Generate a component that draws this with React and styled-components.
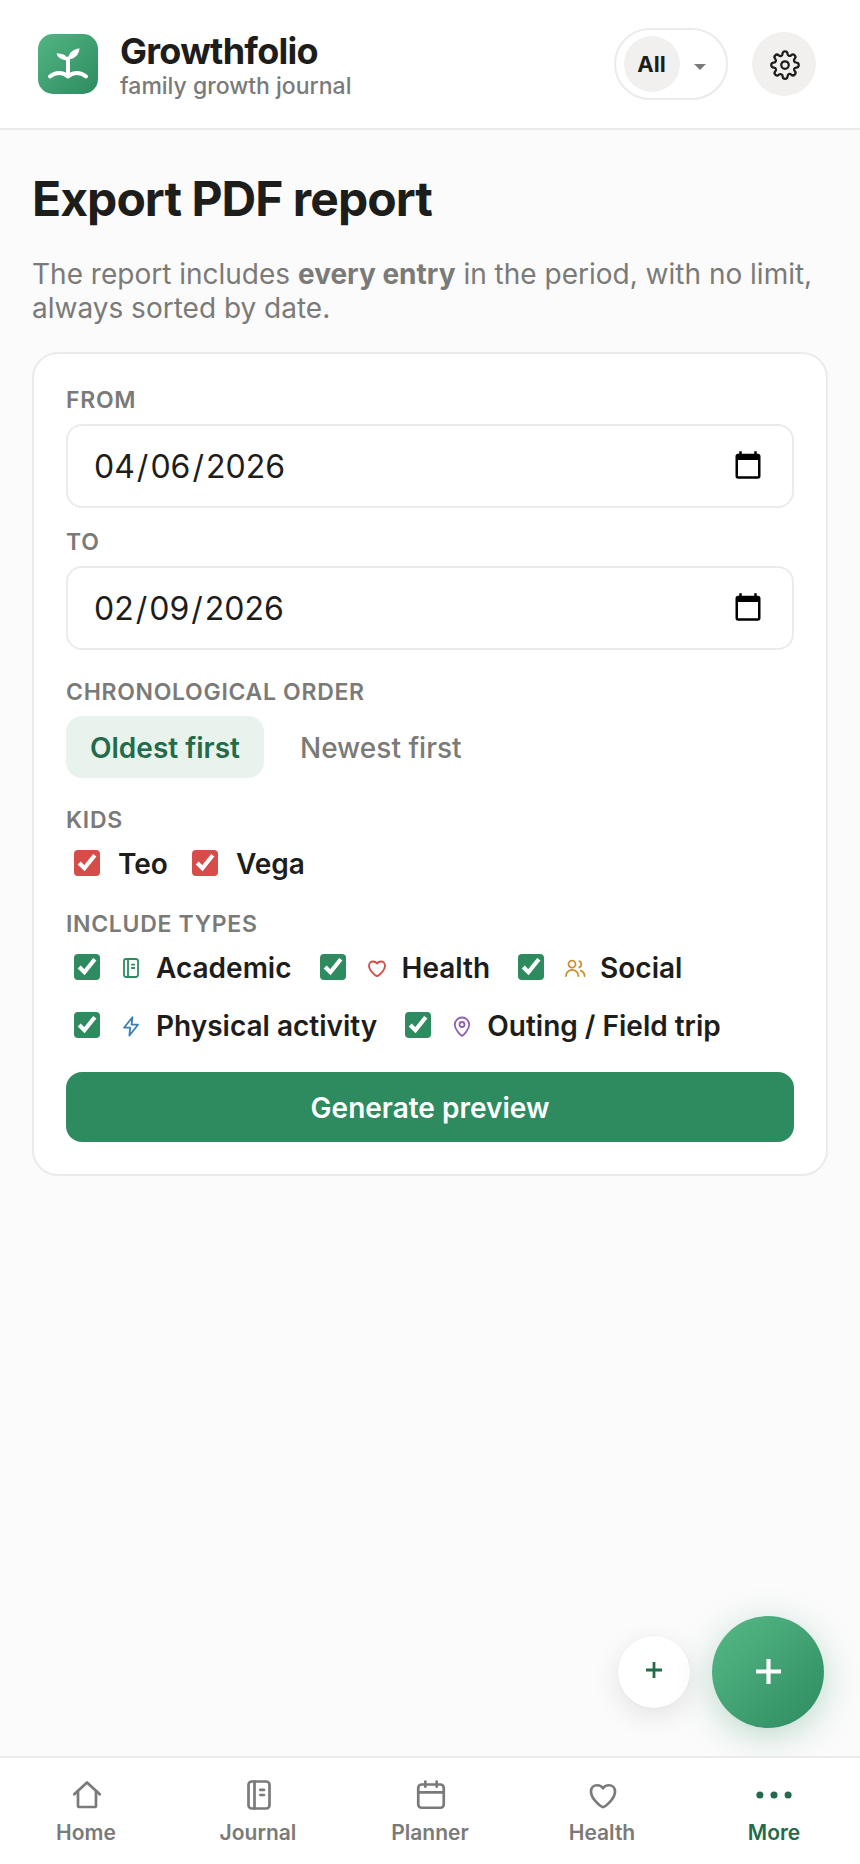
import React, { useState } from 'react';
import styled, { createGlobalStyle } from 'styled-components';

const GlobalStyle = createGlobalStyle`
  * {
    box-sizing: border-box;
  }

  body {
    margin: 0;
    background: #fbfbfb;
    color: #1d1d1b;
    font-family: Inter, 'Liberation Sans', sans-serif;
  }

  button, input {
    font-family: inherit;
  }
`;

const Page = styled.div`
  display: flex;
  flex-direction: column;
  height: 1864px;
`;

const HeaderWrapper = styled.header`
  display: flex;
  align-items: center;
  height: 130px;
  padding: 0 44px 0 38px;
  background: #fff;
  border-bottom: 2px solid #ebebeb;
`;

const Logo = styled.svg`
  width: 60px;
  height: 60px;
  flex-shrink: 0;
`;

const Brand = styled.div`
  flex: 1;
  margin-left: 22px;
  padding-top: 4px;
`;

const BrandName = styled.div`
  font-size: 36px;
  font-weight: 700;
  line-height: 38px;
  letter-spacing: -0.72px;
`;

const BrandTagline = styled.div`
  padding-top: 1px;
  font-size: 23px;
  font-weight: 500;
  line-height: 30px;
  color: #7a7a78;
`;

const Picker = styled.button`
  display: flex;
  align-items: center;
  gap: 14px;
  width: 114px;
  height: 72px;
  padding: 0 0 0 8px;
  background: #fff;
  border: 2px solid #ebebeb;
  border-radius: 36px;
`;

const PickerValue = styled.span`
  display: flex;
  align-items: center;
  justify-content: center;
  width: 56px;
  height: 56px;
  padding-right: 1px;
  border-radius: 50%;
  background: #f1f0ee;
  color: #1d1d1b;
  font-size: 22px;
  font-weight: 700;
`;

const Caret = styled.span`
  margin-top: 5px;
  border-left: 6px solid transparent;
  border-right: 6px solid transparent;
  border-top: 6px solid #7a7a78;
`;

const SettingsButton = styled.button`
  display: flex;
  align-items: center;
  justify-content: center;
  width: 64px;
  height: 64px;
  margin-left: 24px;
  padding: 2px 0 0 2px;
  border: none;
  border-radius: 50%;
  background: #f1f0ee;
  color: #1d1d1b;
`;

const Main = styled.main`
  flex: 1;
  padding: 38px 32px 0;
`;

const Title = styled.h1`
  margin: 0;
  font-size: 48px;
  font-weight: 700;
  line-height: 62px;
  letter-spacing: -0.96px;
`;

const Intro = styled.p`
  margin: 27px 0 0;
  font-size: 28px;
  line-height: 34px;
  color: #7a7a78;
`;

const Card = styled.section`
  display: flex;
  flex-direction: column;
  margin-top: 27px;
  padding: 30px 32px 32px;
  background: #fff;
  border: 2px solid #ebebeb;
  border-radius: 26px;
`;

const Label = styled.div`
  margin-top: ${({ $gap }) => $gap || 0}px;
  font-size: 23px;
  font-weight: 600;
  line-height: 32px;
  letter-spacing: 0.69px;
  text-transform: uppercase;
  color: #7a7a78;
`;

const DateInput = styled.input`
  width: 100%;
  height: 84px;
  margin: 8px 0 0;
  padding: 0 26px 0 24px;
  border: 2px solid #ebebeb;
  border-radius: 16px;
  background: #fff;
  color: #1d1d1b;
  font-size: 32px;
  outline: none;

  &::-webkit-datetime-edit-month-field,
  &::-webkit-datetime-edit-day-field,
  &::-webkit-datetime-edit-year-field {
    padding-left: 2px;
    padding-right: 2px;
  }
`;

const Tabs = styled.div`
  display: flex;
  gap: 12px;
  margin-top: 8px;
`;

const Tab = styled.button`
  height: 62px;
  padding: 1px 24px 0;
  border: none;
  border-radius: 16px;
  background: ${({ $active }) => ($active ? '#e8f3ed' : 'transparent')};
  color: ${({ $active }) => ($active ? '#236b4a' : '#7a7a78')};
  font-size: 28px;
  font-weight: ${({ $active }) => ($active ? 600 : 500)};
`;

const Options = styled.div`
  display: flex;
  flex-wrap: wrap;
  margin-top: 11px;
  row-gap: 24px;
  column-gap: ${({ $gap }) => $gap}px;
`;

const Option = styled.label`
  display: flex;
  align-items: center;
  height: 34px;
  padding-left: 8px;
  font-size: 28px;
  font-weight: 600;

  svg {
    margin: 0 13px 1px 1px;
  }
`;

const Checkbox = styled.input`
  zoom: 2;
  width: 13px;
  height: 13px;
  margin: 0 9px 1px 0;
  accent-color: ${({ $color }) => $color};
`;

const Submit = styled.button`
  height: 70px;
  margin-top: 29px;
  padding-top: 3px;
  border: none;
  border-radius: 16px;
  background: #2e8b60;
  color: #fff;
  font-size: 28px;
  font-weight: 600;
`;

const FloatingActions = styled.div`
  display: flex;
  align-items: center;
  justify-content: flex-end;
  gap: 22px;
  padding: 0 36px 28px 0;
`;

const SmallFab = styled.button`
  display: flex;
  align-items: center;
  justify-content: center;
  width: 72px;
  height: 72px;
  padding: 0 0 4px;
  border: none;
  border-radius: 50%;
  background: #fff;
  color: #236b4a;
  box-shadow: 0 0 0 1px rgba(0, 0, 0, 0.02), 0 8px 28px rgba(0, 0, 0, 0.1);
`;

const MainFab = styled.button`
  display: flex;
  align-items: center;
  justify-content: center;
  width: 112px;
  height: 112px;
  padding: 0 0 1px;
  border: none;
  border-radius: 50%;
  background: linear-gradient(135deg, #56b987, #2e8b60);
  color: #fff;
  box-shadow: 0 8px 36px rgba(46, 139, 96, 0.3);
`;

const BottomNav = styled.nav`
  display: grid;
  grid-template-columns: repeat(5, 1fr);
  height: 108px;
  padding-top: 19px;
  background: #fff;
  border-top: 2px solid #ebebeb;
`;

const NavItem = styled.a`
  display: flex;
  flex-direction: column;
  align-items: center;
  gap: 5px;
  color: ${({ $active }) => ($active ? '#236b4a' : '#7a7a78')};
  font-size: 21px;
  font-weight: 600;
  line-height: 30px;

  svg {
    margin-left: ${({ $active }) => ($active ? 0 : 2)}px;
  }
`;

const shapes = {
  journal: (
    <>
      <rect x="5" y="3" width="14" height="18" rx="2.2" />
      <path d="M9 3v18M12.9 8.6h2.4M12.9 12h2.4" />
    </>
  ),
  heart: <path d="M12 20.1c-1.5-.2-8-5.6-8-10.3C4 7.2 5.8 5.5 8 5.5c1.8 0 3.2.7 4 2 .8-1.3 2.2-2 4-2 2.2 0 4 1.7 4 4.3 0 4.7-6.5 10.1-8 10.3z" />,
  people: (
    <>
      <circle cx="9" cy="8.2" r="3.5" />
      <path d="M3 20a6.2 6.2 0 0 1 12.4 0M16.3 5.2a3.3 3.3 0 0 1 0 6.1M17.7 14.6a6 6 0 0 1 3.9 5.4" />
    </>
  ),
  bolt: <path d="M13.4 3.2 5 13.7h6.2l-.8 7.8L19 10.7h-6.4z" />,
  pin: (
    <>
      <path d="M12 21.9c-1.5-.8-7.2-6.3-7.2-11.2a7.2 7.2 0 0 1 14.4 0c0 4.9-5.7 10.4-7.2 11.2z" />
      <circle cx="12" cy="10.5" r="2.5" />
    </>
  ),
  home: (
    <>
      <path d="m3.5 11.5 8.5-7.9 8.5 7.9" />
      <path d="M6 9.4V19a1 1 0 0 0 1 1h10a1 1 0 0 0 1-1V9.4" />
    </>
  ),
  calendar: (
    <>
      <rect x="3.5" y="5" width="17" height="15.5" rx="2.2" />
      <path d="M3.5 10.2h17M8.2 3v3.5M15.8 3v3.5" />
    </>
  ),
  more: (
    <g fill="currentColor" stroke="none">
      <circle cx="2.6" cy="12" r="2.35" />
      <circle cx="12" cy="12" r="2.35" />
      <circle cx="21.4" cy="12" r="2.35" />
    </g>
  ),
  gear: (
    <>
      <circle cx="12" cy="12" r="3" />
      <path d="M19.4 15a1.65 1.65 0 0 0 .33 1.82l.06.06a2 2 0 0 1-2.83 2.83l-.06-.06a1.65 1.65 0 0 0-1.82-.33 1.65 1.65 0 0 0-1 1.51V21a2 2 0 0 1-4 0v-.09A1.65 1.65 0 0 0 9 19.4a1.65 1.65 0 0 0-1.82.33l-.06.06a2 2 0 0 1-2.83-2.83l.06-.06a1.65 1.65 0 0 0 .33-1.82 1.65 1.65 0 0 0-1.51-1H3a2 2 0 0 1 0-4h.09A1.65 1.65 0 0 0 4.6 9a1.65 1.65 0 0 0-.33-1.82l-.06-.06a2 2 0 0 1 2.83-2.83l.06.06a1.65 1.65 0 0 0 1.82.33H9a1.65 1.65 0 0 0 1-1.51V3a2 2 0 0 1 4 0v.09a1.65 1.65 0 0 0 1 1.51 1.65 1.65 0 0 0 1.82-.33l.06-.06a2 2 0 0 1 2.83 2.83l-.06.06a1.65 1.65 0 0 0-.33 1.82V9a1.65 1.65 0 0 0 1.51 1H21a2 2 0 0 1 0 4h-.09a1.65 1.65 0 0 0-1.51 1z" />
    </>
  ),
  plus: <path d="M12 0v24M0 12h24" strokeLinecap="butt" />,
};

function Icon({ name, size = 24, color = 'currentColor', stroke = 1.8 }) {
  return (
    <svg
      width={size}
      height={size}
      viewBox="0 0 24 24"
      fill="none"
      stroke={color}
      strokeWidth={stroke}
      strokeLinecap="round"
      strokeLinejoin="round"
    >
      {shapes[name]}
    </svg>
  );
}

const kids = ['Teo', 'Vega'];

const types = [
  { label: 'Academic', icon: 'journal', color: '#2e8b60' },
  { label: 'Health', icon: 'heart', color: '#d64c48' },
  { label: 'Social', icon: 'people', color: '#c9922e' },
  { label: 'Physical activity', icon: 'bolt', color: '#3a80b4' },
  { label: 'Outing / Field trip', icon: 'pin', color: '#8e62b0' },
];

const navItems = [
  { label: 'Home', icon: 'home' },
  { label: 'Journal', icon: 'journal' },
  { label: 'Planner', icon: 'calendar' },
  { label: 'Health', icon: 'heart' },
  { label: 'More', icon: 'more' },
];

function Header() {
  return (
    <HeaderWrapper>
      <Logo viewBox="0 0 60 60">
        <defs>
          <linearGradient id="logoFill" x1="0" y1="0" x2="1" y2="1">
            <stop offset="0" stopColor="#52b583" />
            <stop offset="1" stopColor="#2e8b60" />
          </linearGradient>
        </defs>
        <rect width="60" height="60" rx="15" fill="url(#logoFill)" />
        <path
          d="M12 42.5c5.5-4.7 13-4.6 18 0 5-4.6 12.5-4.7 18 0M30 42.5v-18"
          fill="none"
          stroke="#fff"
          strokeWidth="4"
          strokeLinecap="round"
          strokeLinejoin="round"
        />
        <path d="M18.5 19.3c6 .2 10.5 1.7 11.5 7-5.5.2-10-1.8-11.5-7z" fill="#fff" />
        <path d="M41.5 14.2c-6.5 1.3-11 4.3-11.5 11 6.5 0 11-4.2 11.5-11z" fill="#fff" />
      </Logo>
      <Brand>
        <BrandName>Growthfolio</BrandName>
        <BrandTagline>family growth journal</BrandTagline>
      </Brand>
      <Picker>
        <PickerValue>All</PickerValue>
        <Caret />
      </Picker>
      <SettingsButton aria-label="Settings">
        <Icon name="gear" size={30} />
      </SettingsButton>
    </HeaderWrapper>
  );
}

function App() {
  const [from, setFrom] = useState('2026-04-06');
  const [to, setTo] = useState('2026-02-09');
  const [order, setOrder] = useState('oldest');

  return (
    <Page>
      <GlobalStyle />
      <Header />
      <Main>
        <Title>Export PDF report</Title>
        <Intro>
          The report includes <strong>every entry</strong> in the period, with no limit, always sorted by date.
        </Intro>
        <Card>
          <Label>From</Label>
          <DateInput type="date" value={from} onChange={(e) => setFrom(e.target.value)} />
          <Label $gap={18}>To</Label>
          <DateInput type="date" value={to} onChange={(e) => setTo(e.target.value)} />
          <Label $gap={26}>Chronological order</Label>
          <Tabs>
            <Tab $active={order === 'oldest'} onClick={() => setOrder('oldest')}>Oldest first</Tab>
            <Tab $active={order === 'newest'} onClick={() => setOrder('newest')}>Newest first</Tab>
          </Tabs>
          <Label $gap={26}>Kids</Label>
          <Options $gap={16}>
            {kids.map((kid) => (
              <Option key={kid}>
                <Checkbox type="checkbox" defaultChecked $color="#d64c48" />
                {kid}
              </Option>
            ))}
          </Options>
          <Label $gap={27}>Include types</Label>
          <Options $gap={20}>
            {types.map(({ label, icon, color }) => (
              <Option key={label}>
                <Checkbox type="checkbox" defaultChecked $color="#2e8b60" />
                <Icon name={icon} color={color} />
                {label}
              </Option>
            ))}
          </Options>
          <Submit>Generate preview</Submit>
        </Card>
      </Main>
      <FloatingActions>
        <SmallFab aria-label="Quick add">
          <Icon name="plus" size={16} stroke={4.2} />
        </SmallFab>
        <MainFab aria-label="Add entry">
          <Icon name="plus" size={25} stroke={4} />
        </MainFab>
      </FloatingActions>
      <BottomNav>
        {navItems.map(({ label, icon }) => (
          <NavItem key={label} $active={label === 'More'}>
            <Icon name={icon} size={36} />
            {label}
          </NavItem>
        ))}
      </BottomNav>
    </Page>
  );
}

export default App;
